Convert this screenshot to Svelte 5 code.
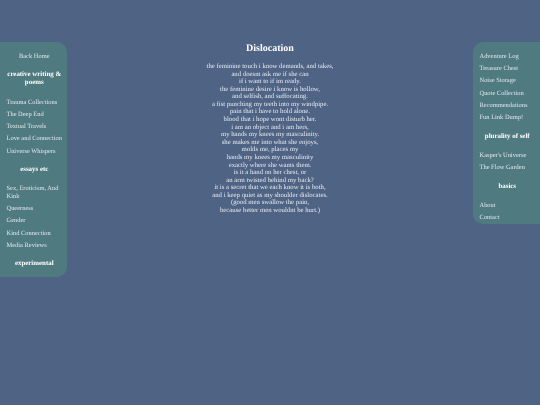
<script>
	const leftNav = [
		{ type: 'link', text: 'Back Home', center: true },
		{ type: 'head', text: 'creative writing & poems' },
		{ type: 'link', text: 'Trauma Collections' },
		{ type: 'link', text: 'The Deep End' },
		{ type: 'link', text: 'Textual Travels' },
		{ type: 'link', text: 'Love and Connection' },
		{ type: 'link', text: 'Universe Whispers' },
		{ type: 'head', text: 'essays etc' },
		{ type: 'link', text: 'Sex, Eroticism, And Kink' },
		{ type: 'link', text: 'Queerness' },
		{ type: 'link', text: 'Gender' },
		{ type: 'link', text: 'Kind Connection' },
		{ type: 'link', text: 'Media Reviews' },
		{ type: 'head', text: 'experimental' }
	]

	const rightNav = [
		{ type: 'link', text: 'Adventure Log' },
		{ type: 'link', text: 'Treasure Chest' },
		{ type: 'link', text: 'Noise Storage' },
		{ type: 'link', text: 'Quote Collection' },
		{ type: 'link', text: 'Recommendations' },
		{ type: 'link', text: 'Fun Link Dump!' },
		{ type: 'head', text: 'plurality of self' },
		{ type: 'link', text: "Kasper's Universe" },
		{ type: 'link', text: 'The Flow Garden' },
		{ type: 'head', text: 'basics' },
		{ type: 'link', text: 'About' },
		{ type: 'link', text: 'Contact' }
	]

	const poem = [
		'the feminine touch i know demands, and takes,',
		'and doesnt ask me if she can',
		'if i want to if im ready.',
		'the feminine desire i know is hollow,',
		'and selfish, and suffocating.',
		'a fist punching my teeth into my windpipe.',
		'pain that i have to hold alone.',
		'blood that i hope wont disturb her.',
		'i am an object and i am hers,',
		'my hands my knees my masculinity.',
		'she makes me into what she enjoys,',
		'molds me, places my',
		'hands my knees my masculinity',
		'exactly where she wants them.',
		'is it a hand on her chest, or',
		'an arm twisted behind my back?',
		'it is a secret that we each know it is both,',
		'and i keep quiet as my shoulder dislocates.',
		'(good men swallow the pain,',
		'because better men wouldnt be hurt.)'
	]
</script>

{#snippet sidebar(items, side)}
	<nav class="sidebar {side}">
		{#each items as item}
			{#if item.type === 'head'}
				<h3>{item.text}</h3>
			{:else}
				<a href="#top" class:center={item.center}>{item.text}</a>
			{/if}
		{/each}
	</nav>
{/snippet}

<div class="page">
	{@render sidebar(leftNav, 'left')}

	<main>
		<h1>Dislocation</h1>
		<p>
			{#each poem as line}
				{line}<br />
			{/each}
		</p>
	</main>

	{@render sidebar(rightNav, 'right')}
</div>

<style>
	:global(body) {
		margin: 0;
		background: #4f6384;
	}

	.page {
		display: flex;
		align-items: flex-start;
		justify-content: space-between;
		height: 405px;
		padding-top: 42px;
		box-sizing: border-box;
		font-family: 'Liberation Serif', 'Times New Roman', serif;
		text-rendering: geometricPrecision;
		overflow: hidden;
		filter: blur(0.3px);
	}

	.sidebar {
		width: 67px;
		flex: none;
		box-sizing: border-box;
		padding: 11px 5px 0 6.5px;
		background: #4f7a80;
		display: flex;
		flex-direction: column;
	}

	.sidebar.left {
		border-radius: 0 10px 10px 0;
	}

	.sidebar.right {
		border-radius: 10px 0 0 10px;
	}

	.sidebar a {
		display: block;
		color: #dfe6ea;
		font-size: 6.45px;
		line-height: 7.6px;
		margin-bottom: 4.65px;
		text-decoration: none;
	}

	.sidebar a:last-child {
		margin-bottom: 2px;
	}

	.sidebar a.center {
		text-align: center;
	}

	.sidebar h3 {
		margin: 6.2px 0 11.3px;
		color: #fff;
		font-size: 6.9px;
		line-height: 8px;
		font-weight: bold;
		text-align: center;
	}

	.sidebar h3:last-child {
		margin-bottom: 9px;
	}

	main {
		flex: 1;
		color: #e3e8f0;
		text-align: center;
	}

	h1 {
		margin: 1px 0 8px;
		color: #fff;
		font-size: 10px;
		line-height: 12px;
		font-weight: bold;
	}

	p {
		margin: 0;
		font-size: 6.75px;
		line-height: 7.58px;
	}
</style>
